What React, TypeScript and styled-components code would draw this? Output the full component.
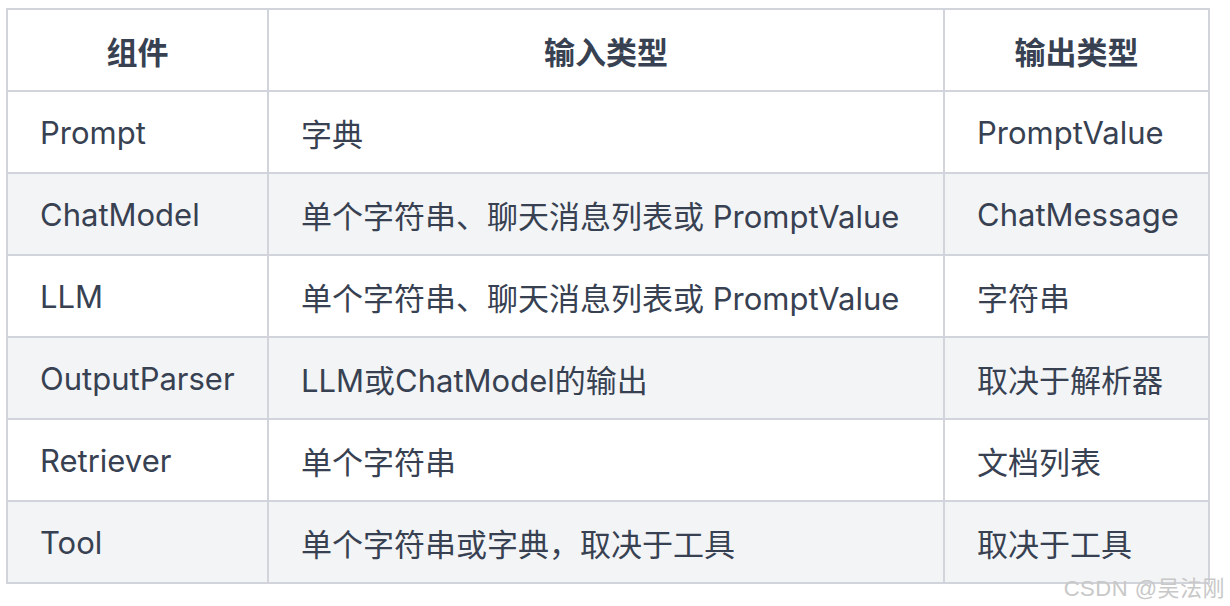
import React from 'react';
import styled, { createGlobalStyle } from 'styled-components';

const GlobalStyle = createGlobalStyle`
  html, body {
    margin: 0;
    padding: 0;
    background: #ffffff;
  }
  body {
    font-family: Inter, "Noto Sans CJK SC", sans-serif;
    color: #374151;
  }
`;

const Page = styled.div`
  position: relative;
  width: 1230px;
  height: 606px;
  padding: 8px 0 0 6px;
  box-sizing: border-box;
`;

const Table = styled.table`
  width: 1202px;
  border-collapse: collapse;
  table-layout: fixed;
  border: 2px solid #d1d5db;
`;

const Row = styled.tr<{ striped?: boolean }>`
  height: 82px;
  background: ${p => (p.striped ? '#f3f4f6' : '#ffffff')};
`;

const HeadCell = styled.th`
  border: 2px solid #d1d5db;
  padding: 0 32px;
  font-size: 31px;
  font-weight: 700;
  text-align: center;
  color: #374151;
`;

const Cell = styled.td`
  border: 2px solid #d1d5db;
  padding: 0 32px;
  font-size: 31px;
  font-weight: 400;
  text-align: left;
  white-space: nowrap;
  color: #374151;
`;

const Watermark = styled.div`
  position: absolute;
  right: 5px;
  top: 570px;
  font-family: "Liberation Sans", "Noto Sans CJK SC", sans-serif;
  font-size: 22px;
  color: #c8c8c8;
  letter-spacing: 0.5px;
`;

const rows = [
  ['Prompt', '字典', 'PromptValue'],
  ['ChatModel', '单个字符串、聊天消息列表或 PromptValue', 'ChatMessage'],
  ['LLM', '单个字符串、聊天消息列表或 PromptValue', '字符串'],
  ['OutputParser', 'LLM或ChatModel的输出', '取决于解析器'],
  ['Retriever', '单个字符串', '文档列表'],
  ['Tool', '单个字符串或字典，取决于工具', '取决于工具'],
];

export default function App() {
  return (
    <Page>
      <GlobalStyle />
      <Table>
        <colgroup>
          <col style={{ width: 261 }} />
          <col style={{ width: 676 }} />
          <col style={{ width: 265 }} />
        </colgroup>
        <thead>
          <Row>
            <HeadCell>组件</HeadCell>
            <HeadCell>输入类型</HeadCell>
            <HeadCell>输出类型</HeadCell>
          </Row>
        </thead>
        <tbody>
          {rows.map((r, i) => (
            <Row key={r[0]} striped={i % 2 === 1}>
              <Cell>{r[0]}</Cell>
              <Cell>{r[1]}</Cell>
              <Cell>{r[2]}</Cell>
            </Row>
          ))}
        </tbody>
      </Table>
      <Watermark>CSDN @吴法刚</Watermark>
    </Page>
  );
}
